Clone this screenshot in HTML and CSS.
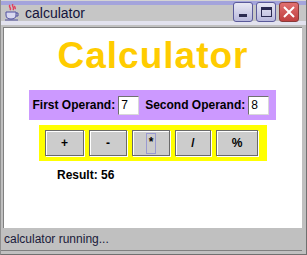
FILE: index.html
```html
<!DOCTYPE html>
<html lang="en">
<head>
  <meta charset="UTF-8">
  <title>calculator</title>
  <link rel="stylesheet" href="styles.css">
</head>
<body>
  <div class="window">
    <!-- Title bar -->
    <div class="titlebar">
      <svg class="app-icon" width="16" height="17" viewBox="0 0 16 17">
        <path d="M6 1c-2 2 2 3 0 5M9 0c-2 2 2 3 0 6M11 2c-1 1 1 2 0 3" stroke="#e04060" stroke-width="1.5" fill="none"/>
        <path d="M2 8h10v3c0 3-2 4-5 4s-5-1-5-4z" fill="#d8d8f0" stroke="#5050a0"/>
        <path d="M12 9h2v3h-2" fill="none" stroke="#5050a0"/>
        <path d="M1 16h13" stroke="#5050a0"/>
      </svg>
      <span class="title">calculator</span>
      <div class="win-buttons">
        <span class="win-btn"><span class="min-glyph"></span></span>
        <span class="win-btn"><span class="max-glyph"></span></span>
        <span class="win-btn close">
          <svg width="12" height="12" viewBox="0 0 12 12"><path d="M1 1L11 11M11 1L1 11" stroke="#fff" stroke-width="2"/></svg>
        </span>
      </div>
    </div>

    <!-- Applet area -->
    <div class="content">
      <h1 class="heading">Calculator</h1>

      <div class="operands">
        <label for="op1">First Operand:</label>
        <input type="text" id="op1" class="field" value="7">
        <label for="op2" class="second">Second Operand:</label>
        <input type="text" id="op2" class="field" value="8">
      </div>

      <div class="ops">
        <button class="op w39">+</button>
        <button class="op w38">-</button>
        <button class="op w38 focused"><span class="focus">*</span></button>
        <button class="op w36">/</button>
        <button class="op w42">%</button>
      </div>

      <p class="result">Result: 56</p>
    </div>

    <!-- Status bar -->
    <div class="status">calculator running...</div>
  </div>
</body>
</html>
```

FILE: styles.css
```css
* {
  margin: 0;
  padding: 0;
  box-sizing: border-box;
}

body {
  background: #ffffff;
  font-family: "Liberation Sans", Arial, sans-serif;
}

/* Window frame */
.window {
  width: 307px;
  height: 255px;
  display: flex;
  flex-direction: column;
  background: #c0c0c0;
  border-left: 1px solid #909090;
  border-right: 1px solid #707070;
  border-bottom: 1px solid #707070;
  padding-bottom: 3px;
}

.titlebar {
  height: 27px;
  display: flex;
  align-items: center;
  padding-left: 3px;
  background: linear-gradient(to bottom,
    #d4d4d4 0px, #d4d4d4 1px,
    #a4a4dc 1px, #a4a4dc 5px,
    #c6c6c6 5px, #c6c6c6 21px,
    #e2e2ee 21px, #e2e2ee 25px,
    #c0c0c0 25px);
}

.app-icon {
  margin-top: -2px;
}

.title {
  margin-left: 5px;
  font-size: 14px;
  color: #14143c;
  flex: 1;
  margin-top: -1px;
}

.win-buttons {
  display: flex;
  gap: 3px;
  margin-right: 7px;
  margin-top: -3px;
}

.win-btn {
  width: 20px;
  height: 20px;
  border: 1px solid #5a5a9a;
  border-radius: 3px;
  background: linear-gradient(to bottom, #e8e8f4, #b8b8dc);
  display: flex;
  align-items: center;
  justify-content: center;
}

.min-glyph {
  width: 8px;
  height: 3px;
  background: #2a2a50;
  margin-top: 7px;
}

.max-glyph {
  width: 11px;
  height: 10px;
  border: 1px solid #2a2a50;
  border-top-width: 3px;
}

.win-btn.close {
  border-color: #8a3a3a;
  background: linear-gradient(to bottom, #e07070, #c04040);
}

/* Applet content */
.content {
  flex: 1;
  margin-left: 2px;
  margin-right: 4px;
  background: #ffffff;
  border-top: 1px solid #808080;
  border-left: 1px solid #808080;
  display: flex;
  flex-direction: column;
  align-items: center;
}

.heading {
  margin-top: 8px;
  font-size: 37px;
  line-height: 40px;
  letter-spacing: 1px;
  font-weight: bold;
  color: #ffcc00;
}

.operands {
  margin-top: 14px;
  height: 30px;
  width: 247px;
  margin-left: -2px;
  background: #cc99ff;
  display: flex;
  align-items: center;
  padding-left: 4px;
  font-size: 12px;
  font-weight: bold;
}

.operands .second {
  margin-left: 6px;
}

.field {
  width: 21px;
  height: 19px;
  margin-left: 3px;
  border: 1px solid #707070;
  border-right-color: #d8d8d8;
  border-bottom-color: #d8d8d8;
  padding-left: 2px;
  font-family: "Liberation Sans", Arial, sans-serif;
  font-size: 12px;
  color: #000;
  background: #fff;
}

.ops {
  margin-top: 5px;
  width: 228px;
  height: 36px;
  background: #ffff00;
  display: flex;
  align-items: center;
  gap: 5px;
  padding: 0 6px;
}

.op {
  height: 26px;
  background: #cccccc;
  border: 1px solid #6a6a6a;
  box-shadow: 1px 1px 0 #ffffff, inset 1px 1px 0 #ffffff;
  font-family: "Liberation Sans", Arial, sans-serif;
  font-size: 12px;
  font-weight: bold;
  color: #000;
  display: flex;
  align-items: center;
  justify-content: center;
}

.w39 { width: 39px; }
.w38 { width: 38px; }
.w36 { width: 36px; }
.w42 { width: 42px; }

.focus {
  display: inline-block;
  padding: 1px 2px 4px;
  border: 1px solid #9a9ad0;
  line-height: 14px;
}

.result {
  align-self: flex-start;
  margin-top: 7px;
  margin-left: 53px;
  font-size: 12px;
  line-height: 14px;
  font-weight: bold;
}

/* Status bar */
.status {
  height: 23px;
  margin-right: 4px;
  padding: 4px 0 0 3px;
  font-size: 12px;
  line-height: 14px;
  color: #1a1a3a;
  background: #c0c0c0;
  border-bottom: 1px solid #808080;
}
```
